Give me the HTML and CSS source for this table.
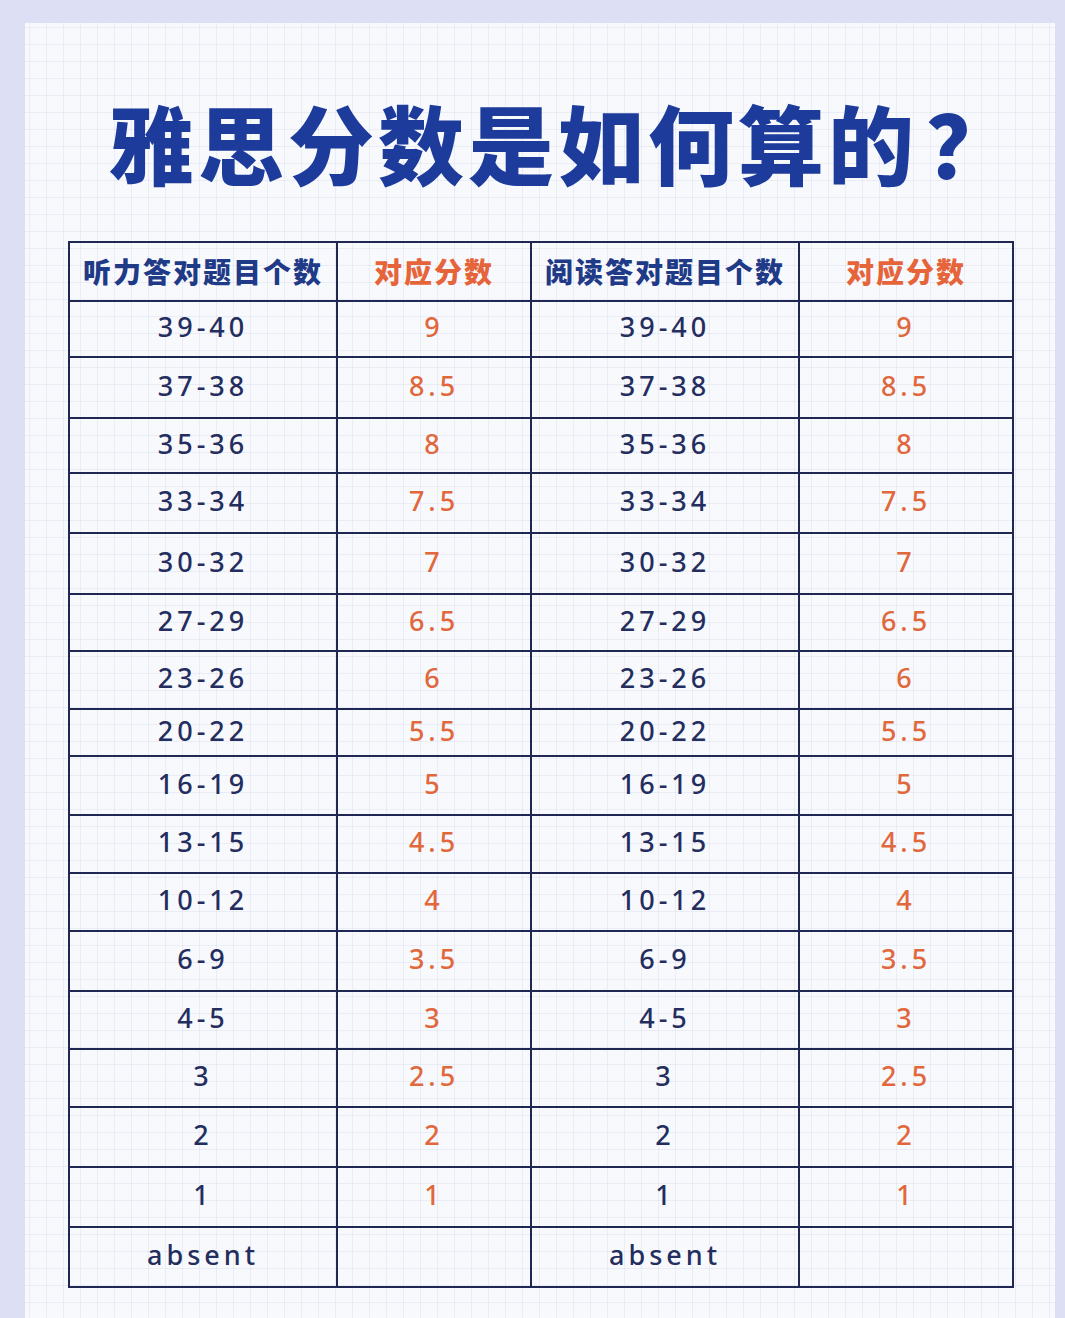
FILE: index.html
```html
<!DOCTYPE html>
<html lang="zh">
<head>
<meta charset="utf-8">
<title>雅思分数是如何算的？</title>
<link rel="stylesheet" href="styles.css">
</head>
<body>
<div class="paper">
  <h1 class="title">雅思分数是如何算的<span class="qmark">？</span></h1>
  <table class="score-table">
    <colgroup>
      <col class="c1"><col class="c2"><col class="c3"><col class="c4">
    </colgroup>
    <thead>
      <tr class="r-head">
        <th class="h-blue">听力答对题目个数</th>
        <th class="h-orange">对应分数</th>
        <th class="h-blue">阅读答对题目个数</th>
        <th class="h-orange">对应分数</th>
      </tr>
    </thead>
    <tbody>
      <tr class="r56"><td>39-40</td><td class="s">9</td><td>39-40</td><td class="s">9</td></tr>
      <tr class="r61"><td>37-38</td><td class="s">8.5</td><td>37-38</td><td class="s">8.5</td></tr>
      <tr class="r55"><td>35-36</td><td class="s">8</td><td>35-36</td><td class="s">8</td></tr>
      <tr class="r60"><td>33-34</td><td class="s">7.5</td><td>33-34</td><td class="s">7.5</td></tr>
      <tr class="r61"><td>30-32</td><td class="s">7</td><td>30-32</td><td class="s">7</td></tr>
      <tr class="r57"><td>27-29</td><td class="s">6.5</td><td>27-29</td><td class="s">6.5</td></tr>
      <tr class="r58"><td>23-26</td><td class="s">6</td><td>23-26</td><td class="s">6</td></tr>
      <tr class="r47"><td>20-22</td><td class="s">5.5</td><td>20-22</td><td class="s">5.5</td></tr>
      <tr class="r59"><td>16-19</td><td class="s">5</td><td>16-19</td><td class="s">5</td></tr>
      <tr class="r58"><td>13-15</td><td class="s">4.5</td><td>13-15</td><td class="s">4.5</td></tr>
      <tr class="r58"><td>10-12</td><td class="s">4</td><td>10-12</td><td class="s">4</td></tr>
      <tr class="r60"><td>6-9</td><td class="s">3.5</td><td>6-9</td><td class="s">3.5</td></tr>
      <tr class="r58"><td>4-5</td><td class="s">3</td><td>4-5</td><td class="s">3</td></tr>
      <tr class="r58"><td>3</td><td class="s">2.5</td><td>3</td><td class="s">2.5</td></tr>
      <tr class="r60"><td>2</td><td class="s">2</td><td>2</td><td class="s">2</td></tr>
      <tr class="r60"><td>1</td><td class="s">1</td><td>1</td><td class="s">1</td></tr>
      <tr class="r60"><td>absent</td><td class="s"></td><td>absent</td><td class="s"></td></tr>
    </tbody>
  </table>
</div>
</body>
</html>
```
FILE: styles.css
```css
html, body {
  margin: 0;
  padding: 0;
}
body {
  background: #dde0f5;
  width: 1065px;
  height: 1318px;
  overflow: hidden;
  font-family: "Noto Sans", "Noto Sans CJK SC", sans-serif;
}
.paper {
  margin: 23px 10px 0 25px;
  height: 1295px;
  box-sizing: border-box;
  padding: 76px 0 0 43px;
  background-color: #f8f9fd;
  background-image:
    linear-gradient(to right, rgba(210, 214, 232, 0.35) 1px, transparent 1px),
    linear-gradient(to bottom, rgba(210, 214, 232, 0.35) 1px, transparent 1px);
  background-size: 17px 17px;
  background-position: 4px 4px;
}
.title {
  margin: 0 0 56px -43px;
  padding-left: 40px;
  height: 86px;
  line-height: 86px;
  font-size: 86px;
  font-weight: 900;
  letter-spacing: 4px;
  text-align: center;
  color: #1d3b9b;
  font-family: "Noto Sans CJK SC", sans-serif;
}
.qmark {
  display: inline-block;
  margin-left: 8px;
  letter-spacing: 0;
}
.score-table {
  border-collapse: collapse;
  table-layout: fixed;
  width: 944px;
}
.c1 { width: 268px; }
.c2 { width: 194px; }
.c3 { width: 268px; }
.c4 { width: 214px; }
.score-table th,
.score-table td {
  border: 2px solid #1f2752;
  padding: 0 0 5px 0;
  text-align: center;
  vertical-align: middle;
}
.score-table th {
  font-family: "Noto Sans CJK SC", sans-serif;
  font-weight: 900;
  font-size: 28px;
  letter-spacing: 2px;
  padding-bottom: 2px;
}
.h-blue { color: #1f3a86; }
.h-orange { color: #e6643a; }
.score-table td {
  font-size: 27px;
  font-weight: 500;
  letter-spacing: 4px;
  color: #242e5e;
}
.score-table td.s {
  color: #e0683c;
}
.r-head { height: 59px; }
.r47 { height: 47px; }
.r55 { height: 55px; }
.r56 { height: 56px; }
.r57 { height: 57px; }
.r58 { height: 58px; }
.r59 { height: 59px; }
.r60 { height: 60px; }
.r61 { height: 61px; }
```
